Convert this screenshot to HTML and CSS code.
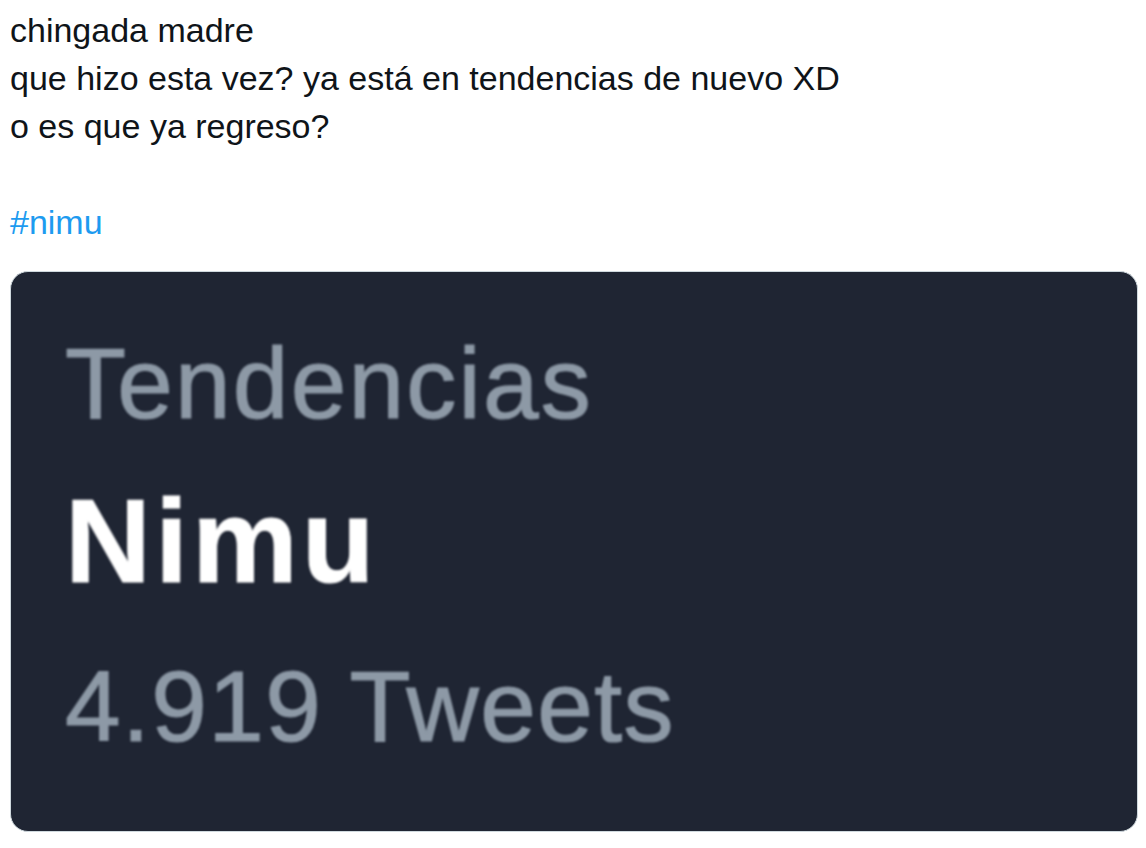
FILE: index.html
```html
<!DOCTYPE html>
<html lang="es">
<head>
<meta charset="utf-8">
<title>Tweet</title>
<link rel="stylesheet" href="styles.css">
</head>
<body>
<div class="tweet">
  <div class="tweet-text">
    <p class="line">chingada madre</p>
    <p class="line">que hizo esta vez? ya está en tendencias de nuevo XD</p>
    <p class="line">o es que ya regreso?</p>
    <p class="line blank">&nbsp;</p>
    <p class="line"><a class="hashtag" href="#">#nimu</a></p>
  </div>
  <div class="media">
    <div class="trend-label">Tendencias</div>
    <div class="trend-name">Nimu</div>
    <div class="trend-count">4.919 Tweets</div>
  </div>
</div>
</body>
</html>
```

FILE: styles.css
```css
html, body {
  margin: 0;
  padding: 0;
  background: #ffffff;
}

body {
  font-family: "Liberation Sans", Arial, sans-serif;
  color: #0f1419;
}

.tweet {
  padding: 6px 8px 0 10px;
  display: flex;
  flex-direction: column;
}

.tweet-text {
  font-size: 34px;
  line-height: 48px;
}

.line {
  margin: 0;
  white-space: nowrap;
}

.hashtag {
  color: #1d9bf0;
  text-decoration: none;
}

.media {
  margin-top: 25px;
  height: 561px;
  box-sizing: border-box;
  background: #1f2533;
  border: 1px solid #cfd9de;
  border-radius: 18px;
  padding: 61px 0 0 54px;
  display: flex;
  flex-direction: column;
  overflow: hidden;
}

.trend-label,
.trend-name,
.trend-count {
  white-space: nowrap;
  filter: blur(0.8px);
}

.trend-label {
  font-size: 100px;
  line-height: 100px;
  color: #8d99a6;
  letter-spacing: 2.2px;
  -webkit-text-stroke: 1.2px #8d99a6;
}

.trend-name {
  margin-top: 49px;
  font-size: 119px;
  line-height: 118px;
  font-weight: 700;
  color: #ffffff;
  letter-spacing: 4px;
  -webkit-text-stroke: 1px #ffffff;
}

.trend-count {
  margin-top: 56px;
  font-size: 100px;
  line-height: 100px;
  color: #8d99a6;
  letter-spacing: 1.4px;
  -webkit-text-stroke: 1.2px #8d99a6;
}
```
